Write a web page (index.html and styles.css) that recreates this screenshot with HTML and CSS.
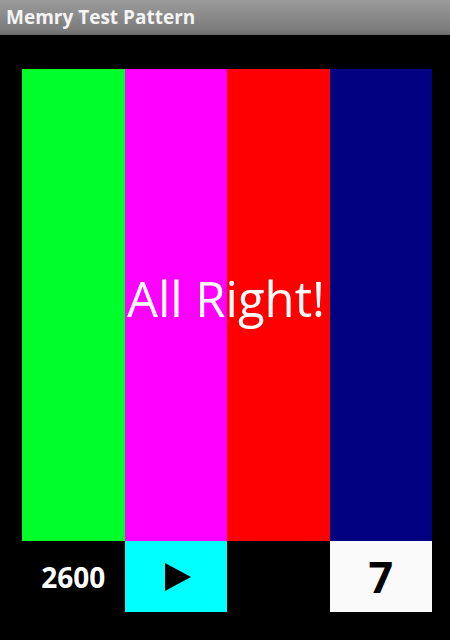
FILE: index.html
```html
<!DOCTYPE html>
<html lang="en">
<head>
    <meta charset="UTF-8">
    <meta name="viewport" content="width=device-width, initial-scale=1.0">
    <title>Memry Test Pattern</title>
    <link rel="stylesheet" href="styles.css">
</head>
<body>

    <div class="title-bar">Memry Test Pattern</div>

    <div class="screen">

        <!-- Colour bars -->
        <div class="pattern">
            <div class="bar green"></div>
            <div class="bar magenta"></div>
            <div class="bar red"></div>
            <div class="bar navy"></div>
            <div class="message">All Right!</div>
        </div>

        <!-- Controls row -->
        <div class="controls">
            <div class="cell score">2600</div>
            <div class="cell play">
                <svg width="26" height="28" viewBox="0 0 26 28">
                    <polygon points="0,0 26,14 0,28" fill="#000"/>
                </svg>
            </div>
            <div class="cell blank"></div>
            <div class="cell level">7</div>
        </div>

    </div>

</body>
</html>
```

FILE: styles.css
```css
* {
    margin: 0;
    padding: 0;
    box-sizing: border-box;
}

body {
    background-color: #000;
    font-family: 'Open Sans', 'DejaVu Sans', sans-serif;
    width: 450px;
    height: 640px;
    overflow: hidden;
}

.title-bar {
    height: 35px;
    line-height: 34px;
    padding-left: 6px;
    color: #f4f4f4;
    font-size: 19px;
    font-weight: bold;
    background: linear-gradient(#9b9b9b, #7c7c7c 85%, #6a6a6a);
}

.screen {
    padding: 34px 18px 0 22px;
}

.pattern {
    display: grid;
    grid-template-columns: repeat(4, 1fr);
    height: 472px;
}

.bar {
    grid-row: 1;
}

.green { grid-column: 1; background-color: #00ff2a; }
.magenta { grid-column: 2; background-color: #ff00ff; }
.red { grid-column: 3; background-color: #ff0000; }
.navy { grid-column: 4; background-color: #000080; }

.message {
    grid-row: 1;
    grid-column: 1 / -1;
    align-self: center;
    text-align: center;
    color: #fff;
    font-size: 49px;
    padding-right: 2px;
    margin-bottom: 14px;
}

.controls {
    display: grid;
    grid-template-columns: repeat(4, 1fr);
    height: 71px;
}

.cell {
    display: flex;
    align-items: center;
    justify-content: center;
    font-weight: bold;
}

.score {
    color: #fff;
    font-size: 28px;
}

.play {
    background-color: #00ffff;
    padding-left: 4px;
}

.level {
    background-color: #fafafa;
    color: #000;
    font-size: 43px;
}
```
